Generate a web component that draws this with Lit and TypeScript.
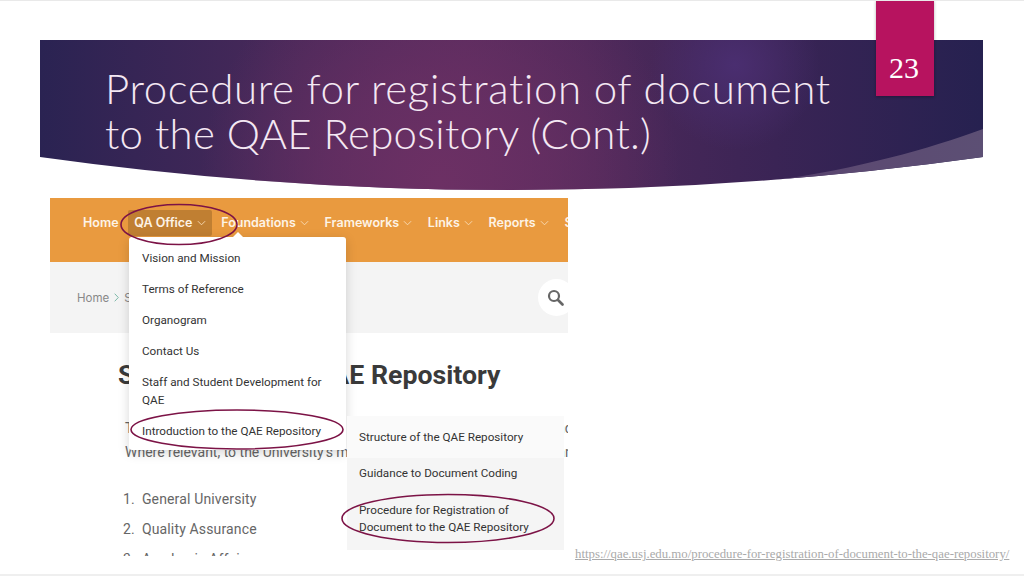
import { LitElement, html, css, svg } from "lit";
import { customElement } from "lit/decorators.js";

const chevron = html`<svg class="chev" viewBox="0 0 10 6" width="9" height="6"><path d="M1 1l4 4 4-4" fill="none" stroke="currentColor" stroke-width="1"/></svg>`;

@customElement("app-root")
export class AppRoot extends LitElement {
  static styles = css`
    :host { display: block; width: 1024px; height: 576px; overflow: hidden; background: #fff; }
    .slide { position: relative; box-sizing: border-box; width: 1024px; height: 576px; padding-top: 40px;
      border-top: 1px solid #e9e9e9; border-bottom: 2px solid #efefef; overflow: hidden; }
    .banner { position: relative; margin: -1px 0 0 40px; width: 943px; height: 150px; box-sizing: border-box; padding: 26px 0 0 65px; }
    .banner-bg { position: absolute; inset: 0; width: 943px; height: 150px; }
    h1 { position: relative; margin: 0; font: 300 42px/45px Lato, sans-serif; color: #f4e8f3; white-space: nowrap; }
    h1 .l1 { display: block; letter-spacing: 0.6px; }
    h1 .l2 { display: block; letter-spacing: 0.25px; }
    .tab { position: absolute; left: 876px; top: -1px; width: 58px; height: 96px; background: #b7135f; color: #fff;
      box-shadow: 0 1px 3px rgba(0,0,0,.3); font: 30px/1 "Liberation Serif", serif; text-align: center; box-sizing: border-box; padding: 53px 2px 0 0; }
    .row { display: flex; margin: 8px 0 0 50px; }
    .shot { position: relative; width: 518px; height: 358px; overflow: hidden; background: #fff; font-family: Roboto, sans-serif; flex: none; }
    .nav { height: 64px; background: #e99a3f; display: flex; align-items: flex-start; padding: 12px 0 0 27px; box-sizing: border-box; color: #fdf3e6;
      font: 600 12.5px/26px Inter, sans-serif; white-space: nowrap; overflow: hidden; }
    .nav span { display: inline-flex; align-items: center; gap: 4px; padding: 0 6px; margin-right: 3.7px; height: 26px; flex: none; }
    .nav .chev { color: #f8dcb8; }
    .nav .active { background: #c07f32; border-radius: 2px; }
    .crumb { height: 71px; background: #f4f4f4; display: flex; align-items: center; padding: 0 0 0 27px; box-sizing: border-box; color: #888; font: 11.5px Inter, sans-serif; gap: 5px; overflow: hidden; }
    .crumb .sep { color: #7cb8a8; flex: none; }
    .search { margin-left: auto; margin-right: -7px; width: 37px; height: 37px; border-radius: 50%; background: #fff; display: flex; align-items: center; justify-content: center; flex: none; padding-right: 2px; box-sizing: border-box; }
    h2 { margin: 26px 0 0 68px; font: 700 26.7px/32px Roboto, sans-serif; color: #3a3a3a; white-space: nowrap; }
    .para { margin: 25px 0 0 75px; font: 14px/24px Roboto, sans-serif; color: #666; white-space: nowrap; }
    .list { margin: 20px 0 0 73px; padding: 0; list-style: none; font: 14px/30px Roboto, sans-serif; color: #666; }
    .list li { display: flex; gap: 7px; letter-spacing: .15px; }
    .menu { position: absolute; left: 79px; top: 39px; width: 217px; height: 213px; background: #fff; border-radius: 3px; box-shadow: 0 3px 12px rgba(0,0,0,.16); box-sizing: border-box; padding: 6px 13px; font: 11.7px/17.5px Roboto, sans-serif; color: #333; }
    .menu::before { content: ""; position: absolute; left: 103px; top: -5px; border: 6px solid transparent; border-top: 0; border-bottom-color: #fff; }
    .menu div { padding: 7px 0 6.5px; }
    .sub { position: absolute; left: 297px; top: 218px; width: 217px; height: 134px; background: #f5f5f5; font: 11.7px/17.5px Roboto, sans-serif; color: #333; box-sizing: border-box; padding: 0 12px; }
    .sub .first { margin: 0 -12px; background: #fafafa; height: 42px; padding: 13px 12px 0; box-sizing: border-box; }
    .sub .second { padding-top: 7px; }
    .sub .third { padding-top: 19px; }
    .link { margin: 0 0 -6px 7px; align-self: flex-end; font: 12.8px/15px "Liberation Serif", serif; color: #aaa; text-decoration: underline; white-space: nowrap; }
    .rings { position: absolute; left: 0; top: 0; width: 1024px; height: 576px; pointer-events: none; }
    .rings ellipse { fill: none; stroke: #7c1346; stroke-width: 1.6; }
  `;

  render() {
    return html`
      <div class="slide">
        <header class="banner">
          <svg class="banner-bg" viewBox="0 0 943 150">
            <defs>
              <linearGradient id="g" x1="0" x2="1" y1="0" y2="0">
                <stop offset="0" stop-color="#2a2352"/>
                <stop offset=".1" stop-color="#362555"/>
                <stop offset=".28" stop-color="#4a295a"/>
                <stop offset=".45" stop-color="#562b5e"/>
                <stop offset=".58" stop-color="#4e295a"/>
                <stop offset=".78" stop-color="#3a2455"/>
                <stop offset="1" stop-color="#262150"/>
              </linearGradient>
              <linearGradient id="s" gradientUnits="userSpaceOnUse" x1="690" x2="943" y1="0" y2="0">
                <stop offset="0" stop-color="#4d3566"/>
                <stop offset=".5" stop-color="#5c4a72"/>
                <stop offset="1" stop-color="#5c4f74"/>
              </linearGradient>
              <radialGradient id="p" gradientUnits="userSpaceOnUse" cx="400" cy="140" r="240">
                <stop offset="0" stop-color="#6c3064"/>
                <stop offset=".45" stop-color="#6c3064" stop-opacity=".65"/>
                <stop offset="1" stop-color="#6c3064" stop-opacity="0"/>
              </radialGradient>
              <radialGradient id="h" gradientUnits="userSpaceOnUse" cx="695" cy="25" r="85">
                <stop offset="0" stop-color="#4a2e70"/>
                <stop offset="1" stop-color="#4a2e70" stop-opacity="0"/>
              </radialGradient>
              <clipPath id="c"><path d="M0 0H943V117Q471.5 183 0 117Z"/></clipPath>
            </defs>
            <g clip-path="url(#c)">
              <rect width="943" height="150" fill="url(#g)"/>
              <rect width="943" height="150" fill="url(#p)"/>
              <rect width="943" height="150" fill="url(#h)"/>
              <path d="M943 89C880 112 800 134 690 146L943 150Z" fill="url(#s)"/>
            </g>
          </svg>
          <h1><span class="l1">Procedure for registration of document</span><span class="l2">to the QAE Repository (Cont.)</span></h1>
        </header>
        <div class="tab">23</div>
        <div class="row">
          <div class="shot">
            <nav class="nav">
              <span>Home</span>
              <span class="active">QA Office ${chevron}</span>
              <span>Foundations ${chevron}</span>
              <span>Frameworks ${chevron}</span>
              <span>Links ${chevron}</span>
              <span>Reports ${chevron}</span>
              <span>Structure</span>
            </nav>
            <div class="crumb">
              <span>Home</span>
              <svg class="sep" width="5" height="9" viewBox="0 0 5 9"><path d="M.7.7l3.6 3.8L.7 8.3" fill="none" stroke="currentColor"/></svg>
              <span>Structure</span>
              <div class="search">
                <svg width="17" height="17" viewBox="0 0 17 17"><circle cx="7" cy="7" r="5" fill="none" stroke="#666" stroke-width="2.2"/><path d="M11 11l4.5 4.5" stroke="#666" stroke-width="2.6" stroke-linecap="round"/></svg>
              </div>
            </div>
            <h2>Structure of the QAE Repository</h2>
            <div class="para">The QAE Repository is a main store of quality assurance documents and c<br />Where relevant, to the University's mission, vision, aim and strategic plan</div>
            <ol class="list">
              <li><span>1.</span><span>General University</span></li>
              <li><span>2.</span><span>Quality Assurance</span></li>
              <li><span>3.</span><span>Academic Affairs</span></li>
            </ol>
            <div class="menu">
              <div>Vision and Mission</div>
              <div>Terms of Reference</div>
              <div>Organogram</div>
              <div>Contact Us</div>
              <div>Staff and Student Development for QAE</div>
              <div>Introduction to the QAE Repository</div>
            </div>
            <div class="sub">
              <div class="first">Structure of the QAE Repository</div>
              <div class="second">Guidance to Document Coding</div>
              <div class="third">Procedure for Registration of Document to the QAE Repository</div>
            </div>
          </div>
          <a class="link">https://qae.usj.edu.mo/procedure-for-registration-of-document-to-the-qae-repository/</a>
        </div>
        <svg class="rings" viewBox="0 0 1024 576">
          ${svg`<ellipse cx="179" cy="223.5" rx="58" ry="20"/><ellipse cx="237" cy="428.5" rx="106" ry="19.5"/><ellipse cx="448" cy="517.5" rx="106" ry="24"/>`}
        </svg>
      </div>
    `;
  }
}
